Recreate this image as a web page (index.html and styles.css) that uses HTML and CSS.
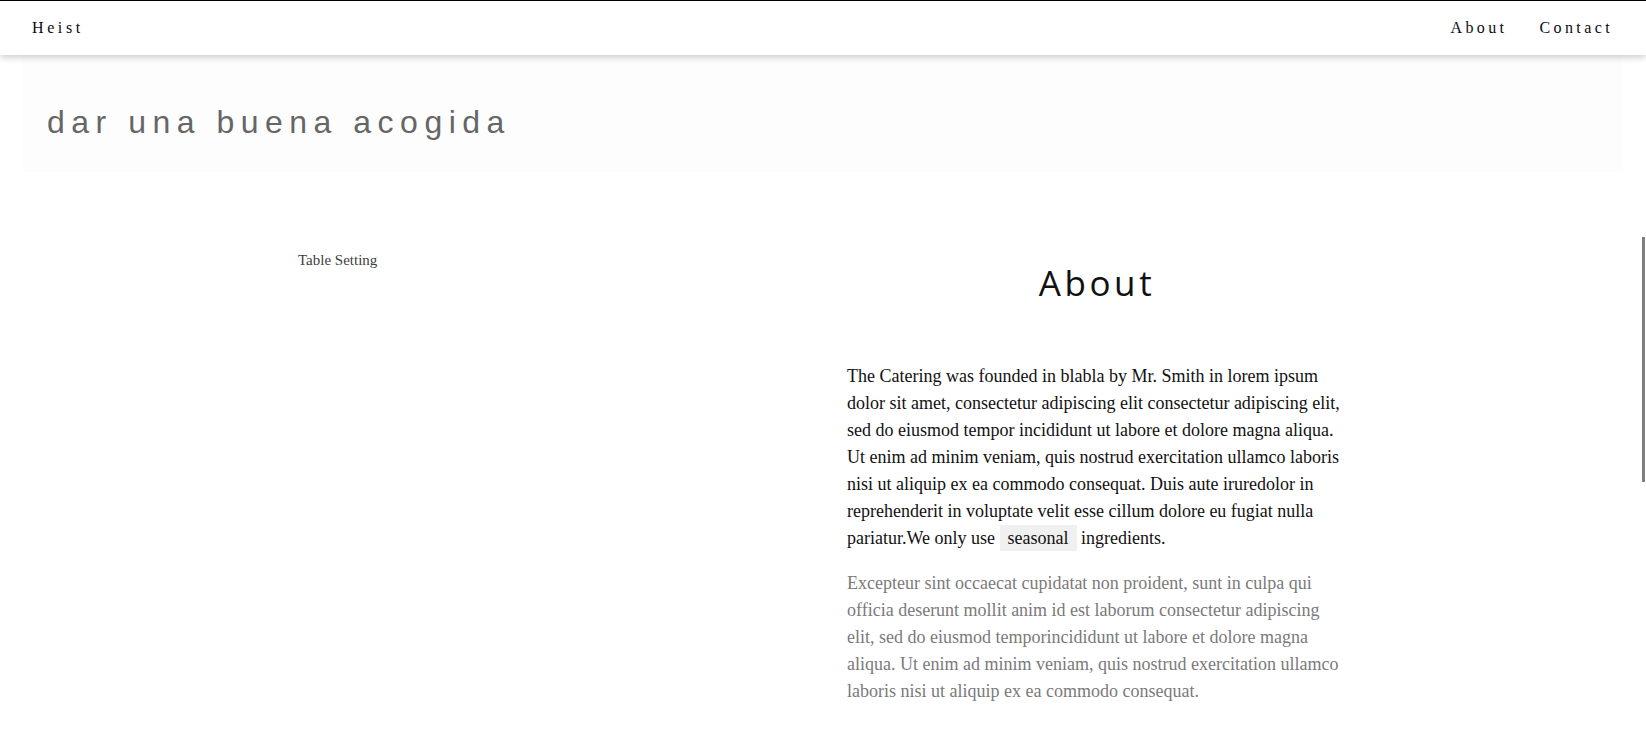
FILE: index.html
```html
<!DOCTYPE html>
<html lang="en">
<head>
<meta charset="utf-8">
<title>Heist</title>
<link rel="stylesheet" href="styles.css">
</head>
<body>
<header class="nav">
  <a class="brand" href="#">Heist</a>
  <nav class="links">
    <a href="#">About</a>
    <a href="#">Contact</a>
  </nav>
</header>
<section class="hero">
  <h1 class="hero-title">dar una buena acogida</h1>
</section>
<main class="about">
  <div class="col col-media">
    <p class="caption">Table Setting</p>
  </div>
  <div class="col col-text">
    <h2 class="about-title">About</h2>
    <p class="lead">The Catering was founded in blabla by Mr. Smith in lorem ipsum dolor sit amet, consectetur adipiscing elit consectetur adipiscing elit, sed do eiusmod tempor incididunt ut labore et dolore magna aliqua. Ut enim ad minim veniam, quis nostrud exercitation ullamco laboris nisi ut aliquip ex ea commodo consequat. Duis aute iruredolor in reprehenderit in voluptate velit esse cillum dolore eu fugiat nulla pariatur.We only use <span class="tag">seasonal</span> ingredients.</p>
    <p class="muted">Excepteur sint occaecat cupidatat non proident, sunt in culpa qui officia deserunt mollit anim id est laborum consectetur adipiscing elit, sed do eiusmod temporincididunt ut labore et dolore magna aliqua. Ut enim ad minim veniam, quis nostrud exercitation ullamco laboris nisi ut aliquip ex ea commodo consequat.</p>
  </div>
</main>
<div class="scroll-thumb"></div>
</body>
</html>
```
FILE: styles.css
```css
html, body {
  margin: 0;
  padding: 0;
  background: #fff;
  overflow: hidden;
  height: 738px;
}

body {
  font-family: "Liberation Serif", "Times New Roman", serif;
  color: #111;
}

.nav {
  position: relative;
  z-index: 2;
  display: flex;
  align-items: center;
  justify-content: space-between;
  height: 54px;
  padding: 0 33px 0 32px;
  border-top: 1px solid #000;
  background: #fff;
  box-shadow: 0 2px 7px rgba(0, 0, 0, 0.22);
}

.nav a {
  font-family: "Liberation Serif", "Times New Roman", serif;
  font-size: 16px;
  letter-spacing: 3.4px;
  color: #0a0a14;
  text-decoration: none;
}

.nav .brand {
  letter-spacing: 3.6px;
}

.links {
  display: flex;
  gap: 32px;
}

.hero {
  margin: 0 23px;
  padding: 49px 24px 31px;
  background: #fdfdfd;
}

.hero-title {
  margin: 0;
  font-family: "Liberation Sans", Arial, sans-serif;
  font-weight: normal;
  font-size: 32px;
  line-height: 37px;
  letter-spacing: 6.5px;
  color: #666;
}

.about {
  display: grid;
  grid-template-columns: 550px 550px;
  justify-content: center;
  padding-top: 79px;
}

.col {
  padding: 0 25px;
}

.col-text {
  padding-left: 24px;
  padding-right: 26px;
}

.caption {
  margin: 0;
  font-size: 15px;
  line-height: 18px;
  color: #404040;
}

.about-title {
  margin: 11px 0 0;
  text-align: center;
  font-family: "Open Sans", "Noto Sans", sans-serif;
  font-weight: normal;
  font-size: 35px;
  line-height: 42px;
  letter-spacing: 3.6px;
  color: #111;
}

.lead,
.muted {
  font-size: 18px;
  line-height: 27px;
}

.lead {
  margin: 59px 0 18px;
  color: #111;
}

.muted {
  margin: 0;
  color: #7a7a7a;
}

.tag {
  background: #f0f0f0;
  padding: 3px 8px;
}

.scroll-thumb {
  position: fixed;
  top: 237px;
  right: 1px;
  width: 3px;
  height: 245px;
  background: #7f7f7f;
}
```
